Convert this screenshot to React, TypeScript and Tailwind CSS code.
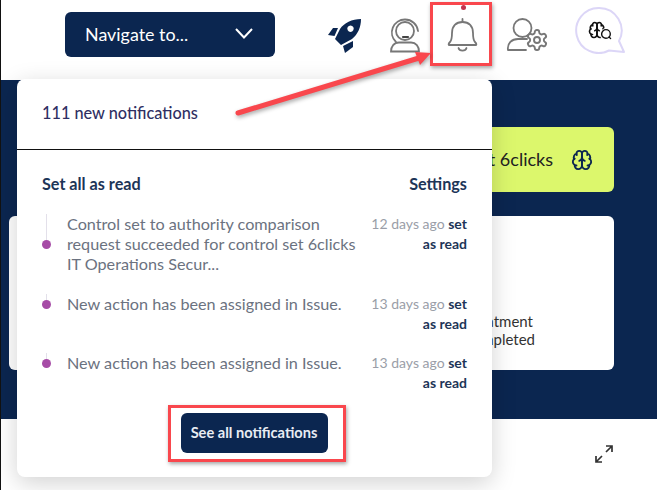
import React from "react";
import { LuBrain, LuSearch, LuSettings } from "react-icons/lu";

const navy = "bg-[#0b2650]";

const items = [
  {
    lines: ["Control set to authority comparison", "request succeeded for control set 6clicks", "IT Operations Secur..."],
    time: "12 days ago",
    gap: "mb-[20px]",
  },
  { lines: ["New action has been assigned in Issue."], time: "13 days ago", gap: "mb-[19px]" },
  { lines: ["New action has been assigned in Issue."], time: "13 days ago", gap: "" },
];

const RocketIcon = () => (
  <svg width="34" height="35" viewBox="0 0 34 35" fill="#0b2650">
    <path fillRule="evenodd" d="M33 1C24 1 16 5 12 11L7 21L13 27L24 21C30 16 33 9 33 1zM22.500 7.500a3.200 3.200 0 1 0 .01 0z" />
    <path d="M10 10L5 10L0 17L6.500 18z" />
    <path d="M25 23L25 29L17 35L15 28z" />
  </svg>
);

const HeadsetIcon = () => (
  <svg width="33" height="35" viewBox="0 0 33 35" fill="none" stroke="#777" strokeWidth="1.8" strokeLinecap="round">
    <circle cx="16" cy="13" r="9" />
    <path d="M7 24A13 13 0 0 1 16 1.500A13 13 0 0 1 29 13" />
    <path d="M14 19h5" stroke="#444" strokeWidth="2.200" />
    <path d="M2 33.500c0-5 3-9 8-9h12c5 0 8 4 8 9z" />
  </svg>
);

const BellIcon = () => (
  <svg width="31" height="35" viewBox="0 0 31 35" fill="none" stroke="#777" strokeWidth="1.800" strokeLinecap="round" strokeLinejoin="round">
    <path d="M15.500 1v3" />
    <path d="M2 27c-1-1 0-2 1-3 2-2 2-5 2-9C5 8 9 4 15.500 4S26 8 26 15c0 4 0 7 2 9 1 1 2 2 1 3z" />
    <path d="M11.500 30c1 3.500 7 3.500 8 0" />
  </svg>
);

const UserGearIcon = () => (
  <svg width="43" height="36" viewBox="0 0 43 36" fill="none" stroke="#777" strokeWidth="1.800" strokeLinecap="round" className="text-[#777]">
    <circle cx="16.500" cy="10" r="9" />
    <path d="M2 32c-1-7 4-11 10-11h9M2 32h18" />
    <LuSettings x="19" y="10" size={24} strokeWidth={1.900} />
  </svg>
);

const BrainSearchIcon = () => (
  <div className="relative h-[47px] w-[50px]">
    <svg className="absolute inset-0" width="50" height="47" viewBox="0 0 50 47" fill="none" stroke="#dcd6f7" strokeWidth="2" strokeLinejoin="round">
      <path d="M24 1a22.500 22.500 0 1 0 10 42.500l15 1.500-5-11A22.500 22.500 0 0 0 24 1z" />
    </svg>
    <LuBrain size={18} strokeWidth={2.200} className="absolute left-[13px] top-[14px] text-[#111]" />
    <LuSearch size={13} strokeWidth={2.600} className="absolute left-[25px] top-[21px] rounded-full bg-white text-[#111]" />
  </div>
);

export default function App() {
  return (
    <div className="relative flex h-[490px] w-[657px] flex-col overflow-hidden border-l border-l-[#111] bg-white font-['Lato','Noto_Sans',sans-serif]">
      <header className="flex h-[80px] shrink-0 items-start pl-[64px] shadow-[0_4px_14px_rgba(0,0,0,0.12)]">
        <button className={`mt-[12px] flex h-[45px] w-[210px] items-center justify-between rounded-md pl-[20px] pr-[22px] text-[17.900px] text-white ${navy}`}>
          Navigate to...
          <svg width="18" height="11" viewBox="0 0 18 11" fill="none" stroke="white" strokeWidth="2" className="mb-[2px]">
            <path d="M1 1L9 9.500L17 1" />
          </svg>
        </button>
        <div className="mt-[18px] ml-[53px] flex">
          <RocketIcon />
        </div>
        <div className="mt-[18px] ml-[27px] flex">
          <HeadsetIcon />
        </div>
        <div className="mt-[18px] ml-[25px] flex">
          <BellIcon />
        </div>
        <div className="mt-[18px] ml-[28px] flex">
          <UserGearIcon />
        </div>
        <div className="mt-[7px] ml-[26px] flex">
          <BrainSearchIcon />
        </div>
      </header>

      <main className={`flex h-[339px] shrink-0 flex-col items-end gap-[24px] pt-[47px] pr-[43px] ${navy}`}>
        <div className="flex h-[65px] w-[300px] items-center justify-end gap-[18px] rounded-md bg-[#dcf76c] pr-[21px] text-[18px] text-[#222]">
          Ask about 6clicks
          <LuBrain size={22} className="text-[#0b2650]" />
        </div>
        <div className="flex h-[154px] w-[605px] flex-col items-end justify-center rounded-md bg-white pt-[74px] pr-[79px] text-[15px] leading-[18px] text-[#333]">
          <span className="mr-[2px]">treatment</span>
          <span>completed</span>
        </div>
      </main>

      <footer className="flex flex-1 items-start justify-end pt-[25px] pr-[43px]">
        <svg width="20" height="20" viewBox="0 0 20 20" fill="none" stroke="#333" strokeWidth="1.700">
          <path d="M2 18L8 12M2 12v6h6M18 2L12 8M12 2h6v6" />
        </svg>
      </footer>

      {/* notification dropdown */}
      <section className="absolute left-[16px] top-[79px] flex h-[398px] w-[475px] flex-col rounded-lg bg-white shadow-[0_6px_24px_rgba(0,0,0,0.18)]">
        <div className="flex h-[71px] items-center border-b border-b-[#111] px-[25px] pb-[2px] text-[16.300px] font-medium text-[#2f2f63]">
          111 new notifications
        </div>
        <div className="flex items-center justify-between px-[25px] pt-[24px] text-[16.200px] font-bold leading-[20px] text-[#1d3557]">
          <span>Set all as read</span>
          <span>Settings</span>
        </div>
        <ul className="mt-[20px] flex flex-col pl-[25px] pr-[25px]">
          {items.map((item, i) => (
            <li key={i} className={`flex items-start ${item.gap}`}>
              <div className="flex items-stretch">
                <div className="flex w-[8px] shrink-0 flex-col items-center justify-center">
                  <span className="w-px flex-1 bg-[#e3e0ea]" />
                  <span className="h-[9px] w-[9px] shrink-0 rounded-full bg-[#a64ca6]" />
                  <span className="flex-1" />
                </div>
                <p className="ml-[17px] w-[300px] text-[16.200px] leading-[20px] text-[#6b7280]">
                  {item.lines.map((line) => (
                    <span key={line} className="block">
                      {line}
                    </span>
                  ))}
                </p>
              </div>
              <div className="ml-auto w-[96px] text-right text-[14px] leading-[20px] text-[#9a9ea8]">
                <span className="block">
                  {item.time} <b className="font-bold text-[#1d3557]">set</b>
                </span>
                <b className="block font-bold text-[#1d3557]">as read</b>
              </div>
            </li>
          ))}
        </ul>
        <div className="mt-auto flex justify-center pb-[24px] pr-[1px]">
          <button className={`h-[40px] w-[147px] rounded-md text-[14.600px] font-bold text-[#e8ecf3] ${navy}`}>
            See all notifications
          </button>
        </div>
      </section>

      {/* annotation marks on top of the screenshot */}
      <div className="absolute left-[429px] top-[2px] h-[64px] w-[62px] border-[3px] border-[#f9474d] shadow-[1px_2px_4px_rgba(0,0,0,0.35)]" />
      <span className="absolute left-[460px] top-[5px] h-[5px] w-[5px] rounded-full bg-[#c2334d]" />
      <div className="absolute left-[167px] top-[405px] h-[57px] w-[178px] border-[3px] border-[#f9474d] shadow-[1px_2px_4px_rgba(0,0,0,0.35)]" />
      <svg className="absolute left-[-1px] top-0 drop-shadow-[1px_2px_2px_rgba(0,0,0,0.35)]" width="657" height="490" fill="none">
        <path d="M238 113L419 58" stroke="#f9474d" strokeWidth="5" strokeLinecap="round" />
        <path d="M431 53L415 52L420 65z" fill="#f9474d" />
      </svg>
    </div>
  );
}
